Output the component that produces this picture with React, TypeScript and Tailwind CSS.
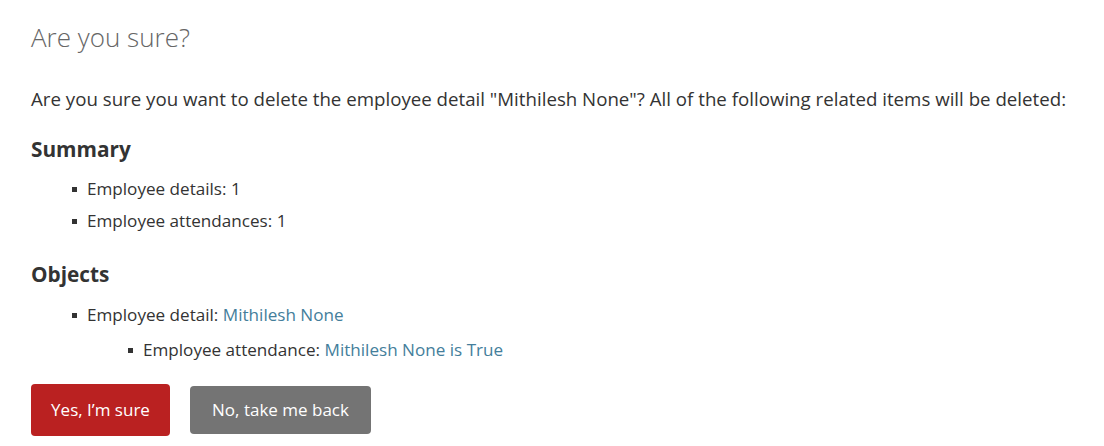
import React from 'react';

const font = { fontFamily: '"Open Sans", "Noto Sans", Arial, sans-serif' };

const Bullet = () => <span className="mr-[10px] inline-block h-[5px] w-[5px] bg-[#333] align-middle" />;

export default function App() {
  return (
    <div style={font} className="min-h-[446px] bg-white pl-[31px] pt-[22px] text-[#333]">
      <h1 className="text-[26px] font-light leading-[30px] text-[#666]">Are you sure?</h1>

      <p className="mt-[35px] text-[18.7px] leading-[24px]">
        Are you sure you want to delete the employee detail "Mithilesh None"? All of the following related items will be deleted:
      </p>

      <h2 className="mt-[24px] text-[20.8px] font-bold leading-[28px]">Summary</h2>
      <ul className="mt-[10px] pl-[41px] text-[17.1px] leading-[32px]">
        <li className="flex items-center"><Bullet />Employee details: 1</li>
        <li className="flex items-center"><Bullet />Employee attendances: 1</li>
      </ul>

      <h2 className="mt-[23px] text-[20.8px] font-bold leading-[28px]">Objects</h2>
      <ul className="mt-[11px] pl-[41px] text-[17.1px] leading-[32px]">
        <li>
          <div className="flex items-center">
            <Bullet />Employee detail:&nbsp;<a className="text-[#447e9b]">Mithilesh None</a>
          </div>
          <ul className="mt-[3px] pl-[56px]">
            <li className="flex items-center">
              <Bullet />Employee attendance:&nbsp;<a className="text-[#447e9b]">Mithilesh None is True</a>
            </li>
          </ul>
        </li>
      </ul>

      <div className="mt-[18px] flex items-center gap-[20px]">
        <button className="h-[52px] w-[139px] rounded-[4px] bg-[#ba2121] text-[17px] text-white">Yes, I’m sure</button>
        <button className="h-[48px] w-[181px] rounded-[4px] bg-[#747474] text-[17px] text-white">No, take me back</button>
      </div>
    </div>
  );
}
